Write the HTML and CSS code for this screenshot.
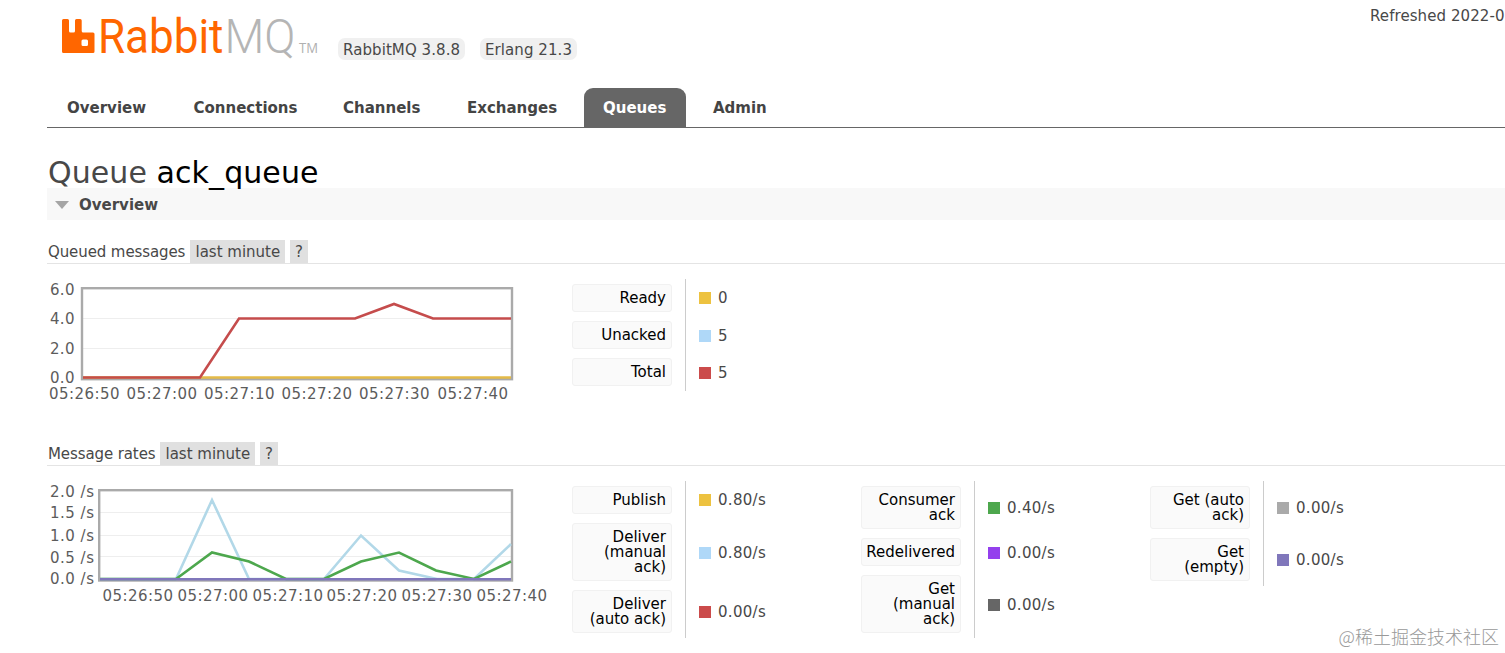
FILE: index.html
```html
<!DOCTYPE html>
<html lang="en">
<head>
<meta charset="utf-8">
<title>RabbitMQ Management</title>
<link rel="stylesheet" href="styles.css">
</head>
<body>
<header class="header">
  <svg class="logo" width="262" height="60" viewBox="60 5 262 60" role="img" aria-label="RabbitMQ">
    <path class="mark" fill-rule="evenodd" d="M63.500 19h4a1.500 1.500 0 0 1 1.500 1.500V31q0 1.500 1.500 1.500h3Q75 32.500 75 31V20.500q0-1.500 1.500-1.500h3.700q1.500 0 1.500 1.500V31q0 1.500 1.500 1.500H93q1.500 0 1.500 1.500v17.500Q94.500 53 93 53H63.500Q62 53 62 51.500v-31Q62 19 63.500 19zM83 39.500q-1.500 0-1.500 1.500v3.500q0 1.500 1.500 1.500h3.500q1.500 0 1.500-1.500V41q0-1.500-1.500-1.500z"/>
    <text class="word rabbit" x="98" y="53" textLength="125.500" lengthAdjust="spacingAndGlyphs">Rabbit</text>
    <text class="word mq" x="224.500" y="53" textLength="71" lengthAdjust="spacingAndGlyphs">MQ</text>
    <text class="tm" x="299" y="53" textLength="19" lengthAdjust="spacingAndGlyphs">TM</text>
  </svg>
  <span class="version v1">RabbitMQ 3.8.8</span>
  <span class="version v2">Erlang 21.3</span>
  <span class="refreshed">Refreshed 2022-0</span>
</header>
<nav class="tabs">
  <a class="t1">Overview</a><a class="t2">Connections</a><a class="t3">Channels</a><a class="t4">Exchanges</a><a class="t5 selected">Queues</a><a class="t6">Admin</a>
</nav>
<main class="main">
  <h1 class="title">Queue <b>ack_queue</b></h1>
  <h2 class="section"><svg width="14" height="8" viewBox="0 0 14 8"><path d="M0 0h14L7 8z"/></svg><span>Overview</span></h2>

  <div class="caption first"><span class="name queued">Queued messages</span><span class="tag range">last minute</span><span class="tag help">?</span></div>
  <div class="row queued-row">
    <svg class="chart" width="525" height="130" viewBox="47 279 525 130">
      <path class="grid" d="M83 318.500H511M83 348.500H511"/>
      <rect class="frame" x="82" y="288.200" width="430" height="91"/>
      <path class="line yellow" d="M83 377.500H511"/>
      <path class="line red" d="M83 377.500H200L239 318.500H355L394 304L433 318.500H511"/>
      <g class="axis">
        <text x="50" y="295" textLength="24.500">6.0</text><text x="50" y="324" textLength="24.500">4.0</text><text x="50" y="354" textLength="24.500">2.0</text><text x="50" y="383" textLength="24.500">0.0</text>
        <text x="49" y="399" textLength="70.500">05:26:50</text><text x="126.500" y="399" textLength="70.500">05:27:00</text><text x="204" y="399" textLength="70.500">05:27:10</text><text x="281.500" y="399" textLength="70.500">05:27:20</text><text x="359" y="399" textLength="70.500">05:27:30</text><text x="437.500" y="399" textLength="70.500">05:27:40</text>
      </g>
    </svg>
    <div class="legend">
      <div class="item"><span class="key">Ready</span><span class="val"><i class="swatch yellow"></i>0</span></div>
      <div class="item"><span class="key">Unacked</span><span class="val"><i class="swatch blue"></i>5</span></div>
      <div class="item"><span class="key">Total</span><span class="val"><i class="swatch red"></i>5</span></div>
    </div>
  </div>

  <div class="caption"><span class="name rates">Message rates</span><span class="tag range">last minute</span><span class="tag help">?</span></div>
  <div class="row">
    <svg class="chart" width="525" height="130" viewBox="47 481 525 130">
      <path class="grid" d="M100 512.500H511M100 535.500H511M100 556.500H511"/>
      <rect class="frame" x="99.200" y="490.200" width="412.800" height="90.300"/>
      <path class="line blue" d="M100 579H176L212 500L249 579H324L361 535.500L399 570.500L437 579H474L511 544"/>
      <path class="line green" d="M100 579H176L212 552.500L249 561.500L286 579H324L361 561.500L399 552.500L436 570.500L474 579L511 561.500"/>
      <path class="line purple" d="M100 579.300H511"/>
      <g class="axis">
        <text x="50" y="497" textLength="44">2.0 /s</text><text x="50" y="518" textLength="44">1.5 /s</text><text x="50" y="541" textLength="44">1.0 /s</text><text x="50" y="563" textLength="44">0.5 /s</text><text x="50" y="584" textLength="44">0.0 /s</text>
        <text x="102.500" y="601" textLength="70.500">05:26:50</text><text x="177.500" y="601" textLength="70.500">05:27:00</text><text x="252.500" y="601" textLength="70.500">05:27:10</text><text x="326.500" y="601" textLength="70.500">05:27:20</text><text x="401.500" y="601" textLength="70.500">05:27:30</text><text x="476.500" y="601" textLength="70.500">05:27:40</text>
      </g>
    </svg>
    <div class="legend">
      <div class="item"><span class="key">Publish</span><span class="val"><i class="swatch yellow"></i>0.80/s</span></div>
      <div class="item"><span class="key">Deliver<br>(manual<br>ack)</span><span class="val"><i class="swatch blue"></i>0.80/s</span></div>
      <div class="item"><span class="key">Deliver<br>(auto ack)</span><span class="val"><i class="swatch red"></i>0.00/s</span></div>
    </div>
    <div class="legend">
      <div class="item"><span class="key">Consumer<br>ack</span><span class="val"><i class="swatch green"></i>0.40/s</span></div>
      <div class="item"><span class="key">Redelivered</span><span class="val"><i class="swatch violet"></i>0.00/s</span></div>
      <div class="item"><span class="key">Get<br>(manual<br>ack)</span><span class="val"><i class="swatch dark"></i>0.00/s</span></div>
    </div>
    <div class="legend">
      <div class="item"><span class="key">Get (auto<br>ack)</span><span class="val"><i class="swatch grey"></i>0.00/s</span></div>
      <div class="item"><span class="key">Get<br>(empty)</span><span class="val"><i class="swatch purple"></i>0.00/s</span></div>
    </div>
  </div>
</main>
<div class="watermark">@稀土掘金技术社区</div>
</body>
</html>
```
FILE: styles.css
```css
* { box-sizing: border-box; }
body {
  margin: 0;
  height: 653px;
  overflow: hidden;
  position: relative;
  background: #fff;
  color: #484848;
  font: 15px/15px "DejaVu Sans", Verdana, sans-serif;
  white-space: nowrap;
}

.header { display: flex; align-items: flex-start; height: 88px; padding-left: 60px; }
.logo { flex: none; margin-top: 5px; }
.word { font: 48px Roboto, "Open Sans", sans-serif; }
.rabbit, .mark { fill: #ff6600; }
.mq { fill: #b5b5b5; font-weight: 300; }
.tm { font: 14px "Open Sans", sans-serif; fill: #b0b0b0; }
.version {
  flex: none;
  height: 22px;
  margin: 38px 0 0 16px;
  padding: 5px 5px 3px;
  border-radius: 7px;
  background: #f0f0f0;
  letter-spacing: 0.08px;
}
.v1 { width: 127px; }
.v2 { width: 97px; margin-left: 15px; }
.refreshed { flex: none; margin: 9px 0 0 793px; letter-spacing: 0.08px; }

.tabs {
  display: flex;
  height: 40px;
  margin-left: 47px;
  border-bottom: 1px solid #666;
  font-weight: bold;
  color: #444;
}
.tabs a { flex: none; height: 39px; padding: 13px 0 0 20px; border-radius: 9px 9px 0 0; }
.t1 { width: 126.500px; }
.t2 { width: 149.500px; }
.t3 { width: 124px; }
.t4 { width: 137px; }
.t5 { width: 102px; }
.t6 { width: 100px; margin-left: 7px; }
.tabs .selected { padding-left: 19px; background: #666; color: #fff; }

.main { padding-left: 47px; }
.title { height: 60px; margin: 0; padding: 27px 0 0 1px; font-size: 30px; line-height: 36px; font-weight: normal; letter-spacing: 0.08px; }
.title b { font-weight: normal; color: #000; }
.section {
  display: flex;
  align-items: center;
  height: 32px;
  margin: 0;
  padding-left: 8px;
  gap: 10px;
  background: #f8f8f8;
  font-size: 15px;
}
.section path { fill: #a5a5a5; }
.section svg { margin-top: 2px; }
.section span { padding-top: 2px; }

.caption { display: flex; height: 25px; border-bottom: 1px solid #e4e4e4; }
.caption.first { margin-top: 19px; }
.caption .name { padding: 6px 0 0 1px; letter-spacing: -0.1px; }
.queued { width: 143px; }
.rates { width: 113px; }
.tag { height: 23px; margin-top: 1px; padding: 5px 5px 3px; background: #e0e0e0; }
.caption .range { width: 95px; padding-left: 5.500px; }
.help { width: 18px; margin-left: 5px; }

.row { display: flex; align-items: flex-start; padding-top: 15px; }
.queued-row { height: 177px; }
.chart { flex: none; }
.grid { stroke: #eee; fill: none; }
.frame { fill: none; stroke: #aaa; stroke-width: 2.400px; }
.line { fill: none; stroke-width: 2.600px; }
.line.yellow { stroke: #e5bb48; }
.line.red { stroke: #c54c4c; }
.line.blue { stroke: #b2d8e8; }
.line.green { stroke: #4da74d; }
.line.purple { stroke: #8077bb; }
.axis { font-size: 15px; fill: #5c5c5c; }

.legend { flex: none; width: 289px; }
.item { display: flex; }
.key {
  width: 100px;
  margin: 4.700px 13px 4.700px 0;
  padding: 6px 5px 5px 0;
  border: 1px solid #f1f1f1;
  border-radius: 3px;
  background: #fafafa;
  color: #000;
  text-align: right;
}
.val { display: flex; align-items: center; gap: 7px; padding: 2px 0 0 13px; border-left: 1px solid #ccc; letter-spacing: 0.3px; }
.swatch { width: 12px; height: 12px; margin-top: -1px; }
.swatch.yellow { background: #edc240; }
.swatch.blue { background: #afd8f8; }
.swatch.red { background: #cb4b4b; }
.swatch.green { background: #4da74d; }
.swatch.violet { background: #9440ed; }
.swatch.dark { background: #666; }
.swatch.grey { background: #aaa; }
.swatch.purple { background: #8077bb; }

.watermark {
  position: absolute;
  right: 6px;
  bottom: 8px;
  color: #999;
  font: 300 18px/18px "Noto Sans CJK SC", sans-serif;
}
```
